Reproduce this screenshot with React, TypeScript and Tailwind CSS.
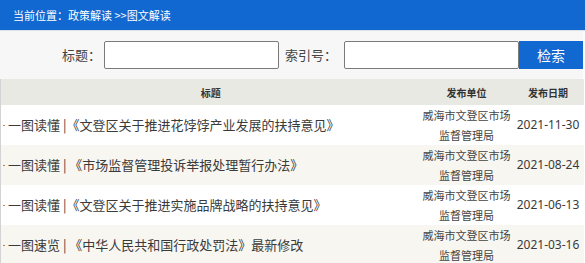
const rows = [
  { title: '一图读懂 |《文登区关于推进花饽饽产业发展的扶持意见》', date: '2021-11-30' },
  { title: '一图读懂 | 《市场监督管理投诉举报处理暂行办法》', date: '2021-08-24' },
  { title: '一图读懂 |《文登区关于推进实施品牌战略的扶持意见》', date: '2021-06-13' },
  { title: '一图速览 | 《中华人民共和国行政处罚法》最新修改', date: '2021-03-16' },
];

export default function App() {
  return (
    <div className="w-[585px] h-[263px] overflow-hidden bg-white font-['Noto_Sans_CJK_SC',sans-serif] text-[#333]">
      {/* breadcrumb */}
      <div className="h-[31px] bg-[#1168d0] border-b border-[#d9e0e8] flex items-center pl-[13px] text-[11px] text-white">
        当前位置：政策解读 &gt;&gt;图文解读
      </div>

      {/* search bar */}
      <div className="h-[48px] bg-[#f7f7f7] border-r-2 border-[#fcfcfc] flex items-center justify-end text-[13px] text-[#444]">
        <span className="mr-[3px]">标题：</span>
        <input className="w-[175px] h-[28px] border border-[#7a7a7a] rounded-[2px] bg-white outline-none" />
        <span className="ml-[6px] mr-[7px]">索引号：</span>
        <input className="w-[175px] h-[28px] border border-[#7a7a7a] rounded-[2px] bg-white outline-none" />
        <button className="w-[64px] h-[28px] bg-[#1168d0] text-white text-[14px]">检索</button>
      </div>

      {/* list */}
      <table className="w-[583px] table-fixed border-collapse border-l border-[#d3d3d3]">
        <colgroup>
          <col className="w-[420px]" />
          <col className="w-[92px]" />
          <col className="w-[71px]" />
        </colgroup>
        <thead>
          <tr className="h-[26px] bg-[#e8e9e3] text-[10px] font-bold">
            <th>标题</th>
            <th>发布单位</th>
            <th>发布日期</th>
          </tr>
        </thead>
        <tbody>
          {rows.map((r, i) => (
            <tr key={r.date} className={i % 2 ? 'h-[40px] bg-[#f7f6f1]' : 'h-[40px] bg-white'}>
              <td className="p-0">
                <div className="flex items-center text-[13px] text-[#3a3a3a] whitespace-nowrap">
                  <span className="ml-[2px] mr-[3px] w-[2px] h-[1px] bg-[#b5855e]" />
                  {r.title}
                </div>
              </td>
              <td className="p-0 text-center text-[11px] leading-[20px] text-[#444]">威海市文登区市场监督管理局</td>
              <td className="p-0 text-center text-[12px] text-[#3a3a3a] font-['Noto_Sans',sans-serif]">{r.date}</td>
            </tr>
          ))}
        </tbody>
      </table>
    </div>
  );
}
